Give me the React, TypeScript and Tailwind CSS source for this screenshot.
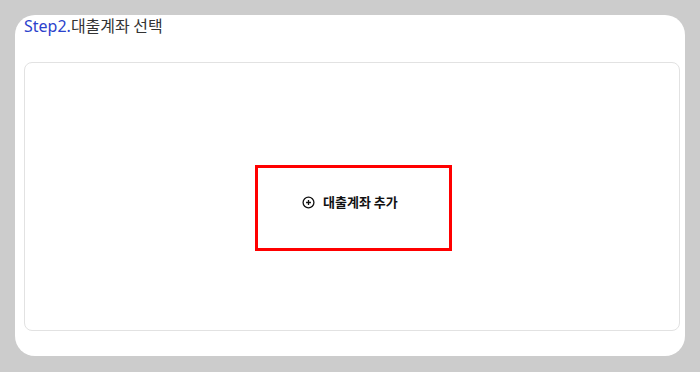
export default function App() {
  return (
    <div className="min-h-[372px] bg-[#cccccc] px-[15px] pt-[15px] pb-[16px] font-['Noto_Sans_CJK_KR',sans-serif]">
      <div className="flex h-[341px] flex-col rounded-[20px] bg-white pb-[25px] pl-[9px] pr-[5px]">
        <h2 className="text-[16px] leading-[20px] text-[#333333]">
          <span className="font-['Noto_Sans','Noto_Sans_CJK_KR',sans-serif] text-[#2b42cc]">Step2.</span>
          대출계좌 선택
        </h2>
        <div className="mt-[26px] flex flex-1 justify-center rounded-[8px] border border-[#e2e2e2] pt-[102px]">
          <button className="ml-[3px] flex h-[86px] w-[197px] items-start justify-start gap-[8px] border-[3px] border-[#ff0000] bg-white pl-[44px] pt-[25px] text-[13px] font-bold leading-[18px] text-[#111111]">
            <svg width="13" height="13" viewBox="0 0 24 24" fill="none" stroke="currentColor" strokeWidth="2.4" className="mt-[3px] shrink-0">
              <circle cx="12" cy="12" r="10" />
              <path d="M12 7.5v9M7.5 12h9" />
            </svg>
            <span>대출계좌 추가</span>
          </button>
        </div>
      </div>
    </div>
  );
}
